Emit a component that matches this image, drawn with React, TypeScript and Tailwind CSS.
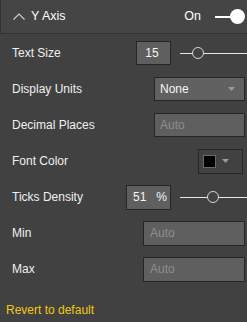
import React from "react";

function Slider({ thumbLeft }: { thumbLeft: number }) {
  return (
    <div className="relative h-[12px] w-[67px]">
      <div className="absolute left-0 right-0 top-[6px] h-px bg-[#e6e6e6]" />
      <div
        className="absolute top-0 h-[12px] w-[12px] rounded-full border-[1.5px] border-[#d8d8d8] bg-[#424242]"
        style={{ left: thumbLeft }}
      />
    </div>
  );
}

function Caret() {
  return (
    <svg width="7" height="4" viewBox="0 0 7 4">
      <path d="M0 0 L7 0 L3.5 4 Z" fill="#9a9a9a" />
    </svg>
  );
}

function Row({ label, children }: { label: string; children: React.ReactNode }) {
  return (
    <div className="flex h-[36px] items-center pl-[12px]">
      <span className="text-[12px] text-[#f0f0f0]">{label}</span>
      <div className="ml-auto flex items-center">{children}</div>
    </div>
  );
}

export default function App() {
  return (
    <div
      className="h-[322px] w-[247px] overflow-hidden bg-[#414141]"
      style={{ fontFamily: '"Liberation Sans", Arial, sans-serif' }}
    >
      <div className="flex h-[34px] items-center border-b border-l border-[#333333] bg-[#454545]">
        <svg className="ml-[12px]" width="12" height="7" viewBox="0 0 12 7">
          <path d="M0.5 6.5 L6 1 L11.5 6.5" fill="none" stroke="#cfcfcf" strokeWidth="1.2" />
        </svg>
        <span className="ml-[6px] text-[12.5px] text-white">Y Axis</span>
        <span className="ml-auto text-[12.5px] text-white">On</span>
        <div className="relative ml-[14px] mr-[2px] flex h-[15px] w-[30px] items-center">
          <div className="h-[2px] w-[20px] bg-white" />
          <div className="absolute right-0 top-0 h-[15px] w-[15px] rounded-full bg-white" />
        </div>
      </div>

      <div className="pt-px">
        <Row label="Text Size">
          <div className="flex h-[24px] w-[35px] items-center justify-center border border-[#262626] bg-[#5f5f5f] text-[12px] text-[#f5f5f5]">
            <span className="mr-[3px]">15</span>
          </div>
          <div className="ml-[9px]">
            <Slider thumbLeft={12} />
          </div>
        </Row>

        <Row label="Display Units">
          <div className="mr-[2px] flex h-[24px] w-[91px] items-center border border-[#262626] bg-[#616161] pl-[5px] pr-[9px] text-[12px] text-[#f5f5f5]">
            <span>None</span>
            <span className="ml-auto flex">
              <Caret />
            </span>
          </div>
        </Row>

        <Row label="Decimal Places">
          <div className="mr-[2px] flex h-[24px] w-[91px] items-center border border-[#262626] bg-[#5f5f5f] pl-[5px] text-[12px] text-[#8e8e8e]">
            Auto
          </div>
        </Row>

        <Row label="Font Color">
          <div className="mr-[4px] flex h-[25px] w-[45px] items-center border border-[#262626] pl-[4px]">
            <div className="h-[13px] w-[13px] border border-[#6a6a6a] bg-black" />
            <span className="ml-[6px] flex">
              <Caret />
            </span>
          </div>
        </Row>

        <Row label="Ticks Density">
          <div className="flex h-[25px] w-[45px] items-center justify-end border border-[#262626] bg-[#5f5f5f] pr-[3px] text-[12px] text-[#f5f5f5]">
            <span>51</span>
            <span className="ml-[10px]">%</span>
          </div>
          <div className="ml-[9px]">
            <Slider thumbLeft={27} />
          </div>
        </Row>

        <Row label="Min">
          <div className="mr-[2px] flex h-[25px] w-[102px] items-center border border-[#262626] bg-[#5f5f5f] pl-[6px] text-[12px] text-[#8e8e8e]">
            Auto
          </div>
        </Row>

        <Row label="Max">
          <div className="mr-[2px] flex h-[25px] w-[102px] items-center border border-[#262626] bg-[#5f5f5f] pl-[6px] text-[12px] text-[#8e8e8e]">
            Auto
          </div>
        </Row>

        <div className="mt-[15px] pl-[6px] text-[12px] leading-[16px] text-[#f2c811]">
          Revert to default
        </div>
      </div>
    </div>
  );
}
